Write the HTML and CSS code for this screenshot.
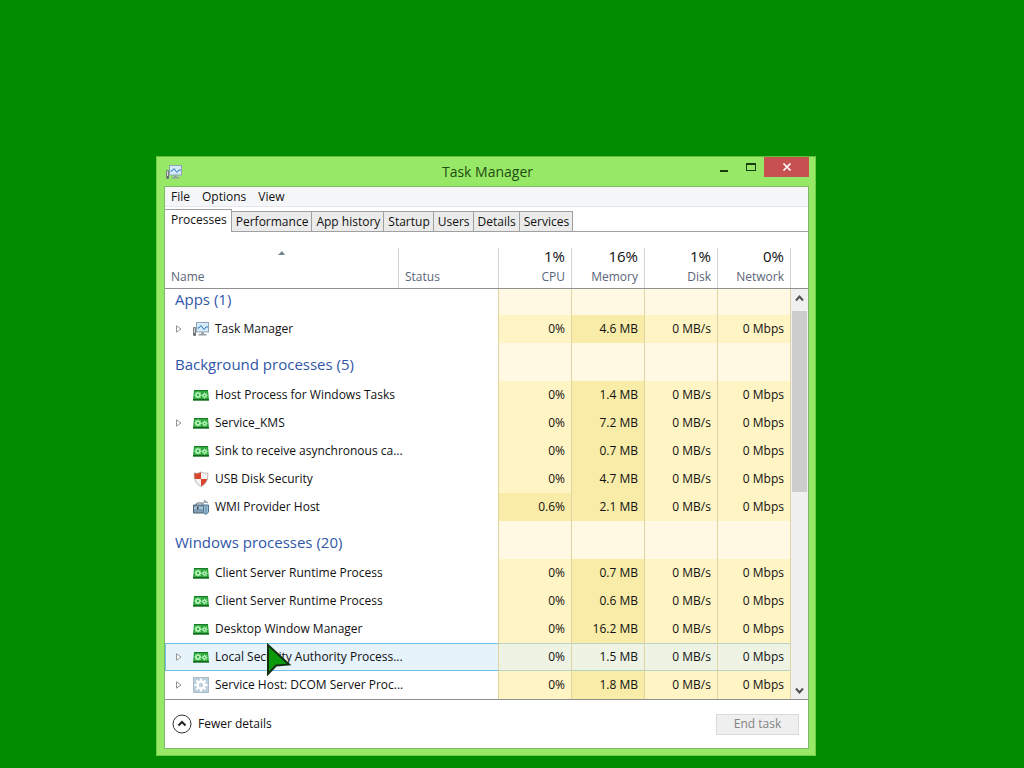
FILE: index.html
```html
<!DOCTYPE html>
<html lang="en">
<head>
  <meta charset="UTF-8" />
  <meta name="viewport" content="width=device-width, initial-scale=1.0"/>
  <title>Task Manager</title>
  <link rel="stylesheet" href="styles.css">
</head>
<body>

<!-- icons used more than once -->
<svg class="defs" width="0" height="0" aria-hidden="true">
  <symbol id="icon-monitor" viewBox="0 0 16 16">
    <path d="M0.500 6.500h2v8h-2z" fill="#d5d5cf" stroke="#7b817f"/>
    <path d="M1 12h1.500v2.500H1z" fill="#5d656b"/>
    <rect x="3.500" y="1.500" width="12" height="9.500" fill="#d3eafa" stroke="#8fa5b5"/>
    <path d="M4.500 7h1.500l2-2.500 3 4 2-2.500h2" fill="none" stroke="#3078b8"/>
    <path d="M8 11.500h3v1.500h2.500v1.500H5.500V13H8z" fill="#949da4"/>
  </symbol>
  <symbol id="icon-exe" viewBox="0 0 16 16">
    <path d="M1 3h14l1 10.500H0z" fill="#2aa63a"/>
    <path d="M1 3h14v1H1z" fill="#1b7a2a"/>
    <path d="M0 12h16v1.500H0z" fill="#14651f"/>
    <circle cx="5" cy="8" r="2" fill="none" stroke="#b9f5bb" stroke-width="1.700"/>
    <path d="M5 4.500v1.500M5 10v1.500M1.500 8H3M7 8h1.500M2.500 5.500l1.100 1.100M6.400 9.400l1.100 1.100M2.500 10.500l1.100-1.100M6.400 6.600l1.100-1.100" stroke="#b9f5bb"/>
    <circle cx="11.500" cy="8.500" r="1.600" fill="none" stroke="#b9f5bb" stroke-width="1.500"/>
    <path d="M11.500 5.500v1.200M11.500 10.300v1.200M8.500 8.500h1.300M13.300 8.500h1.200M12.700 7.300l1-1M12.700 9.700l1 1" stroke="#b9f5bb"/>
  </symbol>
  <symbol id="icon-expand" viewBox="0 0 6 8">
    <path d="M0.500 0.800v6.400L5 4z" fill="#fff" stroke="#8a8a8a" stroke-width="0.900"/>
  </symbol>
</svg>

<main class="desktop">
  <section class="window">
    <header class="titlebar">
      <svg class="icon"><use href="#icon-monitor"/></svg>
      <h1>Task Manager</h1>
      <div class="controls">
        <button class="control" aria-label="Minimize">
          <svg width="10" height="10"><path d="M1 8h8v2H1z" fill="#173d0b"/></svg>
        </button>
        <button class="control" aria-label="Maximize">
          <svg width="10" height="10"><path d="M0 1h10v8H0zM1 3v5h8V3z" fill="#173d0b" fill-rule="evenodd"/></svg>
        </button>
        <button class="control close" aria-label="Close">
          <svg width="10" height="10"><path d="M1.500 1.500l7 7M8.500 1.500l-7 7" stroke="#fff" stroke-width="1.700"/></svg>
        </button>
      </div>
    </header>

    <div class="client">
      <nav class="menu">
        <button>File</button>
        <button>Options</button>
        <button>View</button>
      </nav>

      <div class="tabs">
        <button class="tab active">Processes</button>
        <button class="tab">Performance</button>
        <button class="tab">App history</button>
        <button class="tab">Startup</button>
        <button class="tab">Users</button>
        <button class="tab">Details</button>
        <button class="tab">Services</button>
      </div>

      <div class="list">
        <table class="processes">
          <colgroup>
            <col>
            <col class="col-status">
            <col class="col-num" span="4">
          </colgroup>
          <thead>
            <tr>
              <th class="left"><div class="head">
                <svg class="sort" width="7" height="4"><path d="M0 4l4-4 3 4z" fill="#6f8795"/></svg>
                <span>Name</span>
              </div></th>
              <th class="left"><div class="head"><span>Status</span></div></th>
              <th><div class="head"><b>1%</b><span>CPU</span></div></th>
              <th><div class="head"><b>16%</b><span>Memory</span></div></th>
              <th><div class="head"><b>1%</b><span>Disk</span></div></th>
              <th><div class="head"><b>0%</b><span>Network</span></div></th>
            </tr>
          </thead>
          <tbody>
            <tr class="group first"><td colspan="2">Apps (1)</td><td></td><td></td><td></td><td></td></tr>
            <tr>
              <td><div class="name"><button class="expand" aria-label="Expand"><svg><use href="#icon-expand"/></svg></button><svg class="icon"><use href="#icon-monitor"/></svg>Task Manager</div></td>
              <td></td><td>0%</td><td class="high">4.6 MB</td><td>0 MB/s</td><td>0 Mbps</td>
            </tr>
            <tr class="group"><td colspan="2">Background processes (5)</td><td></td><td></td><td></td><td></td></tr>
            <tr>
              <td><div class="name"><span class="expand"></span><svg class="icon"><use href="#icon-exe"/></svg>Host Process for Windows Tasks</div></td>
              <td></td><td>0%</td><td class="high">1.4 MB</td><td>0 MB/s</td><td>0 Mbps</td>
            </tr>
            <tr>
              <td><div class="name"><button class="expand" aria-label="Expand"><svg><use href="#icon-expand"/></svg></button><svg class="icon"><use href="#icon-exe"/></svg>Service_KMS</div></td>
              <td></td><td>0%</td><td class="high">7.2 MB</td><td>0 MB/s</td><td>0 Mbps</td>
            </tr>
            <tr>
              <td><div class="name"><span class="expand"></span><svg class="icon"><use href="#icon-exe"/></svg>Sink to receive asynchronous ca...</div></td>
              <td></td><td>0%</td><td class="high">0.7 MB</td><td>0 MB/s</td><td>0 Mbps</td>
            </tr>
            <tr>
              <td><div class="name"><span class="expand"></span>
                <svg class="icon" viewBox="0 0 16 16">
                  <path d="M1 2q4 1 7-1v7H1.500Q1 5 1 2z" fill="#d8452c"/>
                  <path d="M8 1q3 2 7 1 0 3-.5 6H8z" fill="#f3f1ef"/>
                  <path d="M1.500 8H8v7.500Q3 13 1.500 8z" fill="#f3f1ef"/>
                  <path d="M8 8h6.500Q13 13 8 15.500z" fill="#d8452c"/>
                  <path d="M1 2q4 1 7-1 3 2 7 1 0 11-7 13.500Q1 13 1 2z" fill="none" stroke="#a9a19c" stroke-width="0.700"/>
                </svg>USB Disk Security</div></td>
              <td></td><td>0%</td><td class="high">4.7 MB</td><td>0 MB/s</td><td>0 Mbps</td>
            </tr>
            <tr>
              <td><div class="name"><span class="expand"></span>
                <svg class="icon" viewBox="0 0 16 16">
                  <path d="M3 6l1-2h5v2" fill="none" stroke="#596a78"/>
                  <path d="M0.500 6h10.500v8H0.500z" fill="#7f9fb8" stroke="#4d6373"/>
                  <path d="M1 9h10" stroke="#dce8f0"/>
                  <path d="M4 8h1.500v2.500H4z" fill="#394b58"/>
                  <path d="M8.500 5.500l4-3.500M11.500 1l1 2 2.500.5" fill="none" stroke="#9a9fa3" stroke-width="1.500"/>
                  <path d="M10.500 6h5v7l-2.500 2.500-2.500-2z" fill="#9dbfd6" stroke="#4f7591"/>
                  <path d="M13 6v9" stroke="#5b88a8"/>
                </svg>WMI Provider Host</div></td>
              <td></td><td class="high">0.6%</td><td class="high">2.1 MB</td><td>0 MB/s</td><td>0 Mbps</td>
            </tr>
            <tr class="group"><td colspan="2">Windows processes (20)</td><td></td><td></td><td></td><td></td></tr>
            <tr>
              <td><div class="name"><span class="expand"></span><svg class="icon"><use href="#icon-exe"/></svg>Client Server Runtime Process</div></td>
              <td></td><td>0%</td><td class="high">0.7 MB</td><td>0 MB/s</td><td>0 Mbps</td>
            </tr>
            <tr>
              <td><div class="name"><span class="expand"></span><svg class="icon"><use href="#icon-exe"/></svg>Client Server Runtime Process</div></td>
              <td></td><td>0%</td><td class="high">0.6 MB</td><td>0 MB/s</td><td>0 Mbps</td>
            </tr>
            <tr>
              <td><div class="name"><span class="expand"></span><svg class="icon"><use href="#icon-exe"/></svg>Desktop Window Manager</div></td>
              <td></td><td>0%</td><td class="high">16.2 MB</td><td>0 MB/s</td><td>0 Mbps</td>
            </tr>
            <tr class="hover">
              <td><div class="name"><button class="expand" aria-label="Expand"><svg><use href="#icon-expand"/></svg></button><svg class="icon"><use href="#icon-exe"/></svg>Local Security Authority Process...</div></td>
              <td></td><td>0%</td><td class="high">1.5 MB</td><td>0 MB/s</td><td>0 Mbps</td>
            </tr>
            <tr>
              <td><div class="name"><button class="expand" aria-label="Expand"><svg><use href="#icon-expand"/></svg></button>
                <svg class="icon" viewBox="0 0 16 16">
                  <rect x="0.500" y="0.500" width="15" height="15" fill="#bccfdd" stroke="#a9bccb"/>
                  <circle cx="8" cy="8" r="3.500" fill="none" stroke="#fff" stroke-width="2.500"/>
                  <path d="M8 1.500v2.500M8 12v2.500M1.500 8H4M12 8h2.500M3.400 3.400l1.800 1.800M10.800 10.800l1.800 1.800M3.400 12.600l1.800-1.800M10.800 5.200l1.800-1.800" stroke="#fff" stroke-width="2"/>
                </svg>Service Host: DCOM Server Proc...</div></td>
              <td></td><td>0%</td><td class="high">1.8 MB</td><td>0 MB/s</td><td>0 Mbps</td>
            </tr>
          </tbody>
        </table>

        <div class="side">
          <div class="side-head"></div>
          <div class="scrollbar">
            <button aria-label="Scroll up"><svg width="9" height="7"><path d="M1 5.500l3.500-4 3.500 4" fill="none" stroke="#505050" stroke-width="2"/></svg></button>
            <div class="track"><div class="thumb"></div></div>
            <button aria-label="Scroll down"><svg width="9" height="7"><path d="M1 1.500l3.500 4 3.500-4" fill="none" stroke="#505050" stroke-width="2"/></svg></button>
          </div>
        </div>
      </div>

      <footer class="footer">
        <button class="fewer">
          <svg width="20" height="20"><circle cx="10" cy="10" r="9" fill="#fff" stroke="#333"/><path d="M6.500 11.500L10 8l3.500 3.500" fill="none" stroke="#222" stroke-width="2"/></svg>
          Fewer details
        </button>
        <button class="end-task" disabled>End task</button>
      </footer>
    </div>
  </section>

  <svg class="pointer" width="26" height="34"><path d="M2 2v29l8-8.500 13-1z" fill="#0c9a0c" stroke="#123012" stroke-width="2"/></svg>
</main>

</body>
</html>
```

FILE: styles.css
```css
* {
  box-sizing: border-box;
}
body {
  margin: 0;
  background: #008c00;
  font-family: "Open Sans", "Noto Sans", sans-serif;
  font-size: 12px;
  line-height: 16px;
  color: #111;
}
button {
  font: inherit;
  color: inherit;
  border: none;
  background: none;
  padding: 0;
}
svg {
  display: block;
  flex: none;
}
.defs {
  position: absolute;
}
.desktop {
  position: relative;
  min-height: 100vh;
  overflow: hidden;
}

/* window frame */
.window {
  position: absolute;
  left: 156px;
  top: 156px;
  width: 660px;
  padding: 0 6px 6px 7px;
  background: #98e868;
  border: 1px solid #6fcf45;
  border-top-color: #62bd38;
}
.titlebar {
  display: grid;
  grid-template-columns: 1fr auto 1fr;
  height: 29px;
  padding-left: 2px;
}
.titlebar .icon {
  align-self: center;
}
.titlebar h1 {
  margin: 0;
  font-size: 14px;
  font-weight: normal;
  line-height: 29px;
  color: #1f4d10;
}
.controls {
  display: flex;
  justify-content: flex-end;
}
.control {
  display: flex;
  justify-content: center;
  align-items: center;
  width: 27px;
  height: 20px;
}
.control.close {
  width: 45px;
  background: #c75050;
}
.icon {
  width: 16px;
  height: 16px;
}
.client {
  background: #fff;
  border: 1px solid #7fb868;
}

/* menu and tabs */
.menu {
  display: flex;
  gap: 12px;
  height: 20px;
  padding: 0 6px;
  background: #f5f6f7;
  border-bottom: 1px solid #e8e8ec;
}
.tabs {
  display: flex;
  align-items: flex-end;
  height: 25px;
  border-bottom: 1px solid #a0a0a0;
}
.tab {
  height: 20px;
  padding: 0 3px 0 4px;
  background: #ebebeb;
  border: 1px solid #a0a0a0;
  border-left: none;
  border-bottom: none;
}
.tab.active {
  height: 23px;
  margin-bottom: -1px;
  padding: 0 4px 2px 6px;
  background: #fff;
}

/* process list */
.list {
  display: flex;
  border-bottom: 1px solid #909090;
}
.processes {
  flex: 1;
  width: 100%;
  table-layout: fixed;
  border-spacing: 0;
}
.col-status {
  width: 100px;
}
.col-num {
  width: 73px;
}
th {
  height: 57px;
  padding: 16px 0 0;
  font-weight: normal;
  text-align: right;
  color: #5a6577;
  border-bottom: 1px solid #909090;
}
th.left {
  text-align: left;
}
.head {
  display: flex;
  flex-direction: column;
  justify-content: flex-end;
  height: 40px;
  padding: 0 6px 3px;
  border-right: 1px solid #d5d5d5;
}
.head b {
  margin-bottom: 3px;
  font-size: 15px;
  font-weight: normal;
  line-height: 20px;
  color: #111;
}
.sort {
  align-self: center;
  margin-bottom: 14px;
}
td {
  height: 28px;
  padding: 0 6px 0 0;
  text-align: right;
  white-space: nowrap;
  background: #fff4c4;
  border-right: 1px solid #e0d5a0;
}
td.high {
  background: #f9eca8;
}
td:first-child {
  padding: 0;
  text-align: left;
  background: #fff;
  border-right: none;
}
tr:not(.group) td:nth-child(2) {
  background: #fff;
}
.group td {
  height: 38px;
  background: #fff9e4;
}
.group td:first-child {
  padding: 4px 0 0 10px;
  font-size: 15px;
  line-height: 20px;
  color: #3057a8;
  background: #fff;
  border-right: 1px solid #e0d5a0;
}
.group.first td {
  height: 26px;
}
.group.first td:first-child {
  padding: 0 0 6px 10px;
  line-height: 18px;
}
.name {
  display: flex;
  align-items: center;
  padding-left: 11px;
}
.name .icon {
  margin: 0 6px 0 11px;
}
.expand {
  flex: none;
  width: 6px;
}
.expand svg {
  width: 6px;
  height: 8px;
}
.hover td,
.hover td.high {
  background: #eef3e4;
  border-top: 1px solid #b9d3c4;
  border-bottom: 1px solid #b9d3c4;
}
.hover td:first-child,
tr.hover:not(.group) td:nth-child(2) {
  background: #e6f3fb;
  border-top-color: #70c0e7;
  border-bottom-color: #70c0e7;
}
.hover td:first-child {
  border-left: 1px solid #70c0e7;
}
.hover .name {
  padding-left: 10px;
}

/* scroll bar */
.side {
  display: flex;
  flex: none;
  flex-direction: column;
  width: 17px;
}
.side-head {
  height: 57px;
  border-bottom: 1px solid #909090;
}
.scrollbar {
  display: flex;
  flex: 1;
  flex-direction: column;
  padding: 0 1px;
  background: #f0f0f0;
}
.scrollbar button {
  display: flex;
  justify-content: center;
  align-items: center;
  height: 18px;
}
.track {
  flex: 1;
  padding-top: 4px;
}
.thumb {
  height: 49%;
  background: #cdcdcd;
}

/* bottom bar */
.footer {
  display: flex;
  justify-content: space-between;
  align-items: center;
  height: 48px;
  padding: 0 9px 0 7px;
}
.fewer {
  display: flex;
  align-items: center;
  gap: 6px;
}
.end-task {
  width: 83px;
  height: 21px;
  color: #838383;
  background: #efefef;
  border: 1px solid #d9d9d9;
}

.pointer {
  position: absolute;
  left: 266px;
  top: 643px;
}
```
